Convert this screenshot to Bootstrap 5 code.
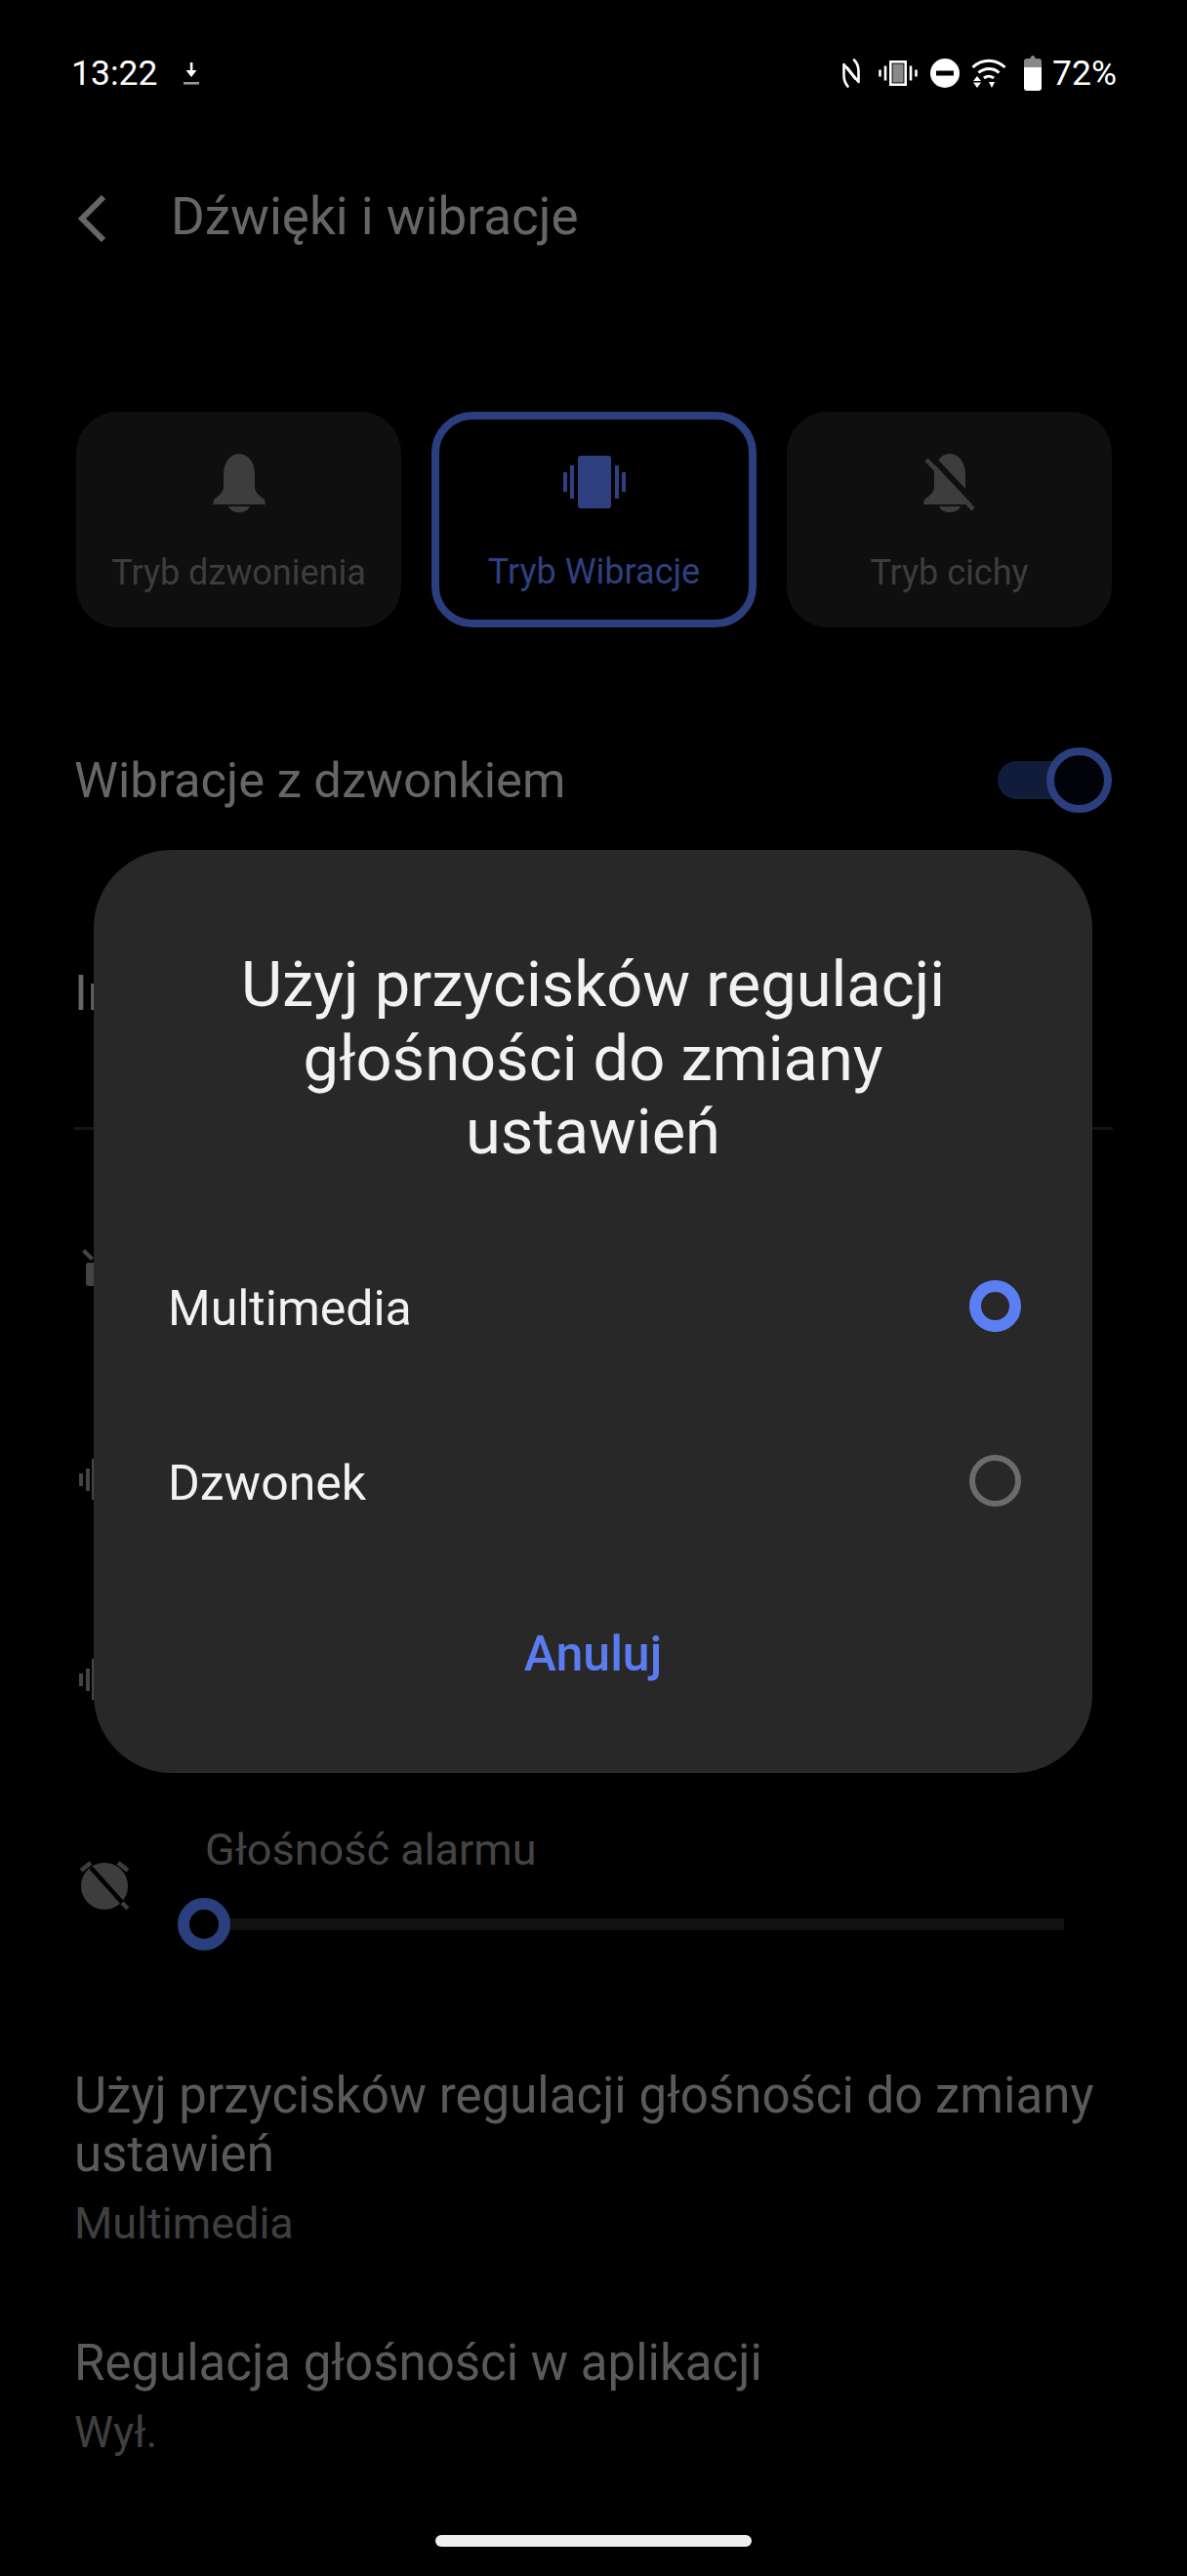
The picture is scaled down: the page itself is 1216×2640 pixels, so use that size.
<!DOCTYPE html>
<html lang="pl">
<head>
    <meta charset="UTF-8">
    <meta name="viewport" content="width=device-width, initial-scale=1.0">
    <title>Dźwięki i wibracje</title>
    <link href="https://cdn.jsdelivr.net/npm/bootstrap@5.3.0/dist/css/bootstrap.min.css" rel="stylesheet">
    <script src="https://cdn.jsdelivr.net/npm/bootstrap@5.3.0/dist/js/bootstrap.bundle.min.js"></script>
    <style>
        body {
            background: #000;
            font-family: Roboto, sans-serif;
            color: #666;
        }
        .screen {
            position: relative;
            width: 1216px;
            height: 2640px;
            overflow: hidden;
            padding: 0 78px;
        }
        .status-bar {
            height: 190px;
            color: #fff;
            font-size: 35.5px;
            padding-top: 52px;
            margin: 0 -6px 0 -5px;
            line-height: 46px;
        }
        .gap-arrow { margin-left: 27px; }
        .gap-19 { margin-left: 19px; }
        .gap-13 { margin-left: 13px; }
        .gap-12 { margin-left: 12px; }
        .gap-18 { margin-left: 18px; }
        .gap-15 { margin-left: 11px; }
        .top-title {
            height: 232px;
            font-size: 53px;
            line-height: 64px;
            color: #666;
        }
        .top-title svg { margin: 10px 0 0 1px; }
        .top-title span { margin-left: 66px; }
        .mode-row {
            display: grid;
            grid-template-columns: repeat(3, 333px);
            gap: 31px;
            height: 221px;
        }
        .mode-tile {
            background: #0f0f0f;
            border-radius: 42px;
            color: #3d3d3d;
            font-size: 36px;
            text-align: center;
            padding-top: 43px;
        }
        .mode-tile.active {
            background: #000;
            border: 8px solid #2b3e7d;
            color: #2e4080;
            padding-top: 37px;
        }
        .mode-tile svg { display: block; margin: 0 auto 35px; }
        .mode-tile.active svg { margin-bottom: 38px; }
        .vib-row {
            margin-top: 123px;
            height: 67px;
            font-size: 50.7px;
            line-height: 64px;
        }
        .vib-row span, .intensity { margin-left: -2px; }
        .sw {
            position: relative;
            width: 117px;
            height: 67px;
            margin-right: -1px;
        }
        .sw::before {
            content: "";
            position: absolute;
            left: 0;
            top: 14px;
            width: 80px;
            height: 39px;
            border-radius: 20px;
            background: #111b3a;
        }
        .sw::after {
            content: "";
            position: absolute;
            right: 0;
            top: 0;
            width: 67px;
            height: 67px;
            border-radius: 50%;
            border: 8px solid #2b3e7d;
            background: #02030a;
        }
        .intensity {
            margin-top: 153px;
            height: 172px;
            font-size: 50.7px;
            line-height: 64px;
            border-bottom: 3px solid #151515;
            margin-right: -2px;
        }
        .vol-list { margin-top: 36px; }
        .vol-row {
            height: 215px;
            display: flex;
            align-items: center;
        }
        .vol-row.short { height: 195px; }
        .alarm-block {
            margin-top: 50px;
            display: flex;
        }
        .alarm-icon { margin: 36px 0 0 3px; flex: none; }
        .alarm-body { flex-grow: 1; }
        .alarm-name {
            font-size: 45px;
            line-height: 54px;
            color: #444;
            margin-left: 75px;
        }
        .slide-wrap {
            position: relative;
            height: 54px;
            margin: 22px -7px 0 47px;
        }
        .slide-track {
            position: absolute;
            left: 27px;
            right: 55px;
            top: 21px;
            height: 12px;
            background: #111;
        }
        .slide-thumb {
            position: absolute;
            left: 0;
            top: 0;
            width: 54px;
            height: 54px;
            border-radius: 50%;
            border: 12px solid #2b3e7d;
            background: #000;
        }
        .info-head {
            font-size: 51px;
            line-height: 60px;
            color: #5a5a5a;
            margin-left: -2px;
        }
        .info-sub {
            font-size: 45px;
            line-height: 54px;
            color: #3f3f3f;
            margin: 14px 0 0 -2px;
        }
        .info-first { margin-top: 119px; }
        .info-next { margin-top: 86px; }
        .home-bar {
            position: absolute;
            left: 446px;
            top: 2598px;
            width: 324px;
            height: 12px;
            border-radius: 6px;
            background: #eee;
        }
        .dialog {
            position: absolute;
            left: 96px;
            top: 871px;
            width: 1023px;
            height: 946px;
            background: #282828;
            border-radius: 80px;
            color: #f2f2f2;
        }
        .dialog-title {
            font-size: 65px;
            line-height: 75.5px;
            text-align: center;
            margin: 0;
            font-weight: 400;
            padding: 101px 100px 0;
        }
        .dialog-opts { margin-top: 50px; }
        .dialog-opt {
            height: 179px;
            padding: 0 73px 0 76px;
            font-size: 50px;
        }
        .dialog-opt span { padding-top: 6px; }
        .radio-on, .radio-off {
            width: 53px;
            height: 53px;
            border-radius: 50%;
        }
        .radio-on { border: 12px solid #5b7ff2; }
        .radio-off { border: 6px solid #6b6b6b; }
        .cancel-wrap { margin-top: 56px; }
        .btn-cancel {
            color: #5b7cf0;
            font-size: 50px;
            font-weight: 500;
            line-height: 64px;
            background: none;
            border: 0;
            padding: 0;
        }
    </style>
</head>
<body>
<div class="screen">
    <div class="status-bar d-flex justify-content-between align-items-start">
        <div class="d-flex align-items-center">
            <span>13:22</span>
            <svg class="gap-arrow" width="16" height="23" viewBox="0 0 16 23" fill="#fff"><rect x="6.800" y="0" width="2.600" height="10"/><path d="M2.500 8h11L8 15z"/><rect x="0" y="20" width="16" height="2.600" fill="#999"/></svg>
        </div>
        <div class="d-flex align-items-center">
            <svg width="18" height="30" viewBox="0 0 18 30" fill="none" stroke="#fff" stroke-width="2.600" stroke-linecap="round" stroke-linejoin="round"><path d="M12 1.500C15.500 5 16.500 8 16.500 13v11L5 9.500"/><path d="M5.500 28.500C2.500 25 1.500 22 1.500 17V6L13 20.500"/></svg>
            <svg class="gap-19" width="40" height="26" viewBox="0 0 40 26" fill="none"><rect x="12.300" y="1.300" width="15.400" height="23.400" stroke="#fff" stroke-width="2.600"/><rect x="14.500" y="3.500" width="11" height="19" fill="#888"/><path d="M7 5.500v15M33 5.500v15" stroke="#fff" stroke-width="2.600"/><path d="M1.500 9.500v7M38.500 9.500v7" stroke="#fff" stroke-width="2.600"/></svg>
            <svg class="gap-13" width="30" height="30" viewBox="0 0 30 30"><circle cx="15" cy="15" r="15" fill="#fff"/><rect x="6" y="12.500" width="18" height="5" fill="#000"/></svg>
            <svg class="gap-12" width="36" height="30" viewBox="0 0 36 30" fill="none" stroke="#fff" stroke-width="3"><path d="M1.500 9C11 0 25 0 34.500 9"/><path d="M7.500 14.500c6-5.500 15-5.500 21 0"/><path d="M13 20c3-2.500 7-2.500 10 0"/><path d="M6 18l4 5H2z" fill="#fff" stroke="none"/><path d="M2 24.500h8L6 30z" fill="#fff" stroke="none"/><path d="M18 24h6l-3 6z" fill="#fff" stroke="none"/></svg>
            <svg class="gap-18" width="18" height="36" viewBox="0 0 18 36"><path d="M3 3h3l2-3h2l2 3h3a3 3 0 0 1 3 3v6H0V6a3 3 0 0 1 3-3z" fill="#888"/><path d="M0 12h18v21a3 3 0 0 1-3 3H3a3 3 0 0 1-3-3z" fill="#fff"/></svg>
            <span class="gap-15">72%</span>
        </div>
    </div>

    <div class="top-title d-flex align-items-start">
        <svg width="30" height="48" viewBox="0 0 30 48" fill="none" stroke="#666" stroke-width="6"><path d="M27 2 5 24l22 22"/></svg>
        <span>Dźwięki i wibracje</span>
    </div>

    <div class="mode-row">
        <div class="mode-tile">
            <svg width="56" height="60" viewBox="0 0 56 60" fill="#3d3d3d"><path d="M28 0c-9 0-16 9-16 21v13c0 6-5 9-10 13l-1 5h54l-1-5c-5-4-10-7-10-13V21C44 9 37 0 28 0z"/><path d="M17 54h22c-2 4-6 6-11 6s-9-2-11-6z"/></svg>
            Tryb dzwonienia
        </div>
        <div class="mode-tile active">
            <svg width="64" height="54" viewBox="0 0 64 54" fill="#2e4080"><rect x="15" y="0" width="34" height="54" rx="3"/><rect x="7" y="10" width="4" height="34"/><rect x="53" y="10" width="4" height="34"/><rect x="0" y="17" width="4" height="20"/><rect x="60" y="17" width="4" height="20"/></svg>
            Tryb Wibracje
        </div>
        <div class="mode-tile">
            <svg width="56" height="60" viewBox="0 0 56 60" fill="#3d3d3d"><path d="M28 0c-9 0-16 9-16 21v13c0 6-5 9-10 13l-1 5h54l-1-5c-5-4-10-7-10-13V21C44 9 37 0 28 0z"/><path d="M17 54h22c-2 4-6 6-11 6s-9-2-11-6z"/><path d="M9 3 56 53" stroke="#0f0f0f" stroke-width="6"/><path d="M4 6 52 57" stroke="#3d3d3d" stroke-width="4.500"/></svg>
            Tryb cichy
        </div>
    </div>

    <div class="vib-row d-flex justify-content-between align-items-center">
        <span>Wibracje z dzwonkiem</span>
        <div class="sw"></div>
    </div>

    <div class="intensity">In</div>

    <div class="vol-list">
        <div class="vol-row">
            <svg width="20" height="44" viewBox="0 0 20 44" fill="#444"><path d="M9 0l9 9-3 3-9-9z"/><rect x="10" y="14" width="10" height="24" rx="3"/></svg>
        </div>
        <div class="vol-row">
            <svg width="20" height="44" viewBox="0 0 20 44" fill="#444"><rect x="3" y="15" width="4" height="13"/><rect x="10" y="10" width="4" height="23"/><rect x="16" y="0" width="4" height="42"/></svg>
        </div>
        <div class="vol-row short">
            <svg width="20" height="44" viewBox="0 0 20 44" fill="#444"><rect x="3" y="15" width="4" height="13"/><rect x="10" y="10" width="4" height="23"/><rect x="16" y="0" width="4" height="42"/></svg>
        </div>
    </div>

    <div class="alarm-block">
        <svg class="alarm-icon" width="54" height="54" viewBox="0 0 54 54"><circle cx="26" cy="28" r="24" fill="#3d3d3d"/><path d="M2 12 12 4M40 4l10 8" stroke="#3d3d3d" stroke-width="4.500"/><path d="M12 9 48 49" stroke="#000" stroke-width="4.500"/><path d="M44 45l6 6" stroke="#3d3d3d" stroke-width="4.500"/></svg>
        <div class="alarm-body">
            <div class="alarm-name">Głośność alarmu</div>
            <div class="slide-wrap">
                <div class="slide-track"></div>
                <div class="slide-thumb"></div>
            </div>
        </div>
    </div>

    <div class="info-first">
        <div class="info-head">Użyj przycisków regulacji głośności do zmiany ustawień</div>
        <div class="info-sub">Multimedia</div>
    </div>
    <div class="info-next">
        <div class="info-head">Regulacja głośności w aplikacji</div>
        <div class="info-sub">Wył.</div>
    </div>

    <div class="home-bar"></div>

    <div class="dialog d-flex flex-column">
        <h2 class="dialog-title">Użyj przycisków regulacji głośności do zmiany ustawień</h2>
        <div class="dialog-opts">
            <div class="dialog-opt d-flex justify-content-between align-items-center">
                <span>Multimedia</span>
                <div class="radio-on"></div>
            </div>
            <div class="dialog-opt d-flex justify-content-between align-items-center">
                <span>Dzwonek</span>
                <div class="radio-off"></div>
            </div>
        </div>
        <div class="text-center cancel-wrap">
            <button class="btn-cancel">Anuluj</button>
        </div>
    </div>
</div>
</body>
</html>
